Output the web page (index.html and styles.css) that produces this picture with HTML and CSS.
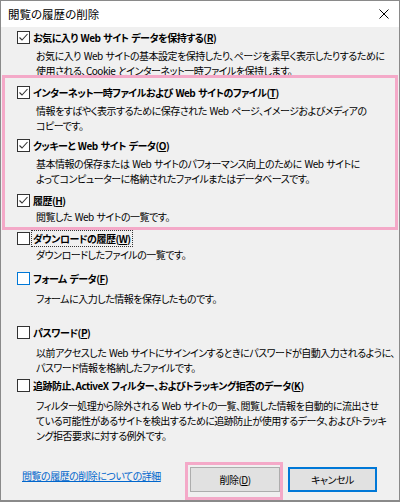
FILE: index.html
```html
<!DOCTYPE html>
<html lang="ja">
<head>
  <meta charset="UTF-8" />
  <title>閲覧の履歴の削除</title>
  <link rel="stylesheet" href="styles.css">
</head>
<body>
  <div class="window">
    <div class="titlebar">
      <span class="title">閲覧の履歴の削除</span>
      <svg class="close" width="10" height="10" viewBox="0 0 10 10">
        <path d="M0.5 0.5 L9.5 9.5 M9.5 0.5 L0.5 9.5" stroke="#000" stroke-width="1" fill="none" />
      </svg>
    </div>

    <div class="content">
      <div class="item first">
        <div class="check"><span class="box"><svg width="11" height="11" viewBox="0 0 11 11"><polyline points="1.5,5.5 4,8 9.5,2" stroke="#333" stroke-width="1.1" fill="none" /></svg></span><span class="name">お気に入り Web サイト データを保持する(<u>R</u>)</span></div>
        <p class="desc">お気に入り Web サイトの基本設定を保持したり、ページを素早く表示したりするために<br>使用される、Cookie とインターネット一時ファイルを保持します。</p>
      </div>

      <div class="item">
        <div class="check"><span class="box"><svg width="11" height="11" viewBox="0 0 11 11"><polyline points="1.5,5.5 4,8 9.5,2" stroke="#333" stroke-width="1.1" fill="none" /></svg></span><span class="name">インターネット一時ファイルおよび Web サイトのファイル(<u>T</u>)</span></div>
        <p class="desc">情報をすばやく表示するために保存された Web ページ、イメージおよびメディアの<br>コピーです。</p>
      </div>

      <div class="item near">
        <div class="check"><span class="box"><svg width="11" height="11" viewBox="0 0 11 11"><polyline points="1.5,5.5 4,8 9.5,2" stroke="#333" stroke-width="1.1" fill="none" /></svg></span><span class="name">クッキーと Web サイト データ(<u>O</u>)</span></div>
        <p class="desc">基本情報の保存または Web サイトのパフォーマンス向上のために Web サイトに<br>よってコンピューターに格納されたファイルまたはデータベースです。</p>
      </div>

      <div class="item">
        <div class="check"><span class="box"><svg width="11" height="11" viewBox="0 0 11 11"><polyline points="1.5,5.5 4,8 9.5,2" stroke="#333" stroke-width="1.1" fill="none" /></svg></span><span class="name">履歴(<u>H</u>)</span></div>
        <p class="desc tight">閲覧した Web サイトの一覧です。</p>
      </div>

      <div class="item">
        <div class="check"><span class="box"></span><span class="name focus">ダウンロードの履歴(<u>W</u>)</span></div>
        <p class="desc tight">ダウンロードしたファイルの一覧です。</p>
      </div>

      <div class="item form">
        <div class="check"><span class="box hover"></span><span class="name">フォーム データ(<u>F</u>)</span></div>
        <p class="desc loose">フォームに入力した情報を保存したものです。</p>
      </div>

      <div class="item wide">
        <div class="check"><span class="box"></span><span class="name">パスワード(<u>P</u>)</span></div>
        <p class="desc loose">以前アクセスした Web サイトにサインインするときにパスワードが自動入力されるように、<br>パスワード情報を格納したファイルです。</p>
      </div>

      <div class="item close-up">
        <div class="check"><span class="box"></span><span class="name">追跡防止、ActiveX フィルター、およびトラッキング拒否のデータ(<u>K</u>)</span></div>
        <p class="desc loose">フィルター処理から除外される Web サイトの一覧、閲覧した情報を自動的に流出させ<br>ている可能性があるサイトを検出するために追跡防止が使用するデータ、およびトラッキ<br>ング拒否要求に対する例外です。</p>
      </div>
    </div>

    <div class="footer">
      <a class="more" href="#">閲覧の履歴の削除についての詳細</a>
      <div class="buttons">
        <button class="btn marked">削除(<u>D</u>)</button>
        <button class="btn default">キャンセル</button>
      </div>
    </div>

    <div class="highlight"></div>
  </div>
</body>
</html>
```

FILE: styles.css
```css
* {
  box-sizing: border-box;
}

body {
  margin: 0;
  font-family: "Noto Sans CJK JP", "Noto Sans", sans-serif;
  font-size: 10px;
  letter-spacing: -0.5px;
  word-spacing: 1px;
  color: #000;
  font-feature-settings: "palt";
}

.window {
  position: relative;
  width: 400px;
  height: 502px;
  border: 1px solid #8a8a8a;
  border-bottom-width: 2px;
  background: #f0f0f0;
  display: flex;
  flex-direction: column;
}

.titlebar {
  height: 26px;
  background: #fff;
  display: flex;
  align-items: center;
  padding: 0 8px 0 7px;
}

.titlebar .title {
  font-size: 11.5px;
  letter-spacing: 0;
  flex: 1;
}

.titlebar .close {
  margin-right: 2px;
}

.content {
  flex: 1;
  padding: 2px 0 0 16px;
}

.item {
  margin-top: 6px;
}

.item.first {
  margin-top: 0;
}

.item.near {
  margin-top: 4px;
}

.item.form {
  margin-top: 8px;
}

.item.wide {
  margin-top: 18px;
}

.item.close-up {
  margin-top: 2px;
}

.check {
  display: flex;
  align-items: center;
  height: 16px;
  white-space: nowrap;
}

.box {
  width: 13px;
  height: 13px;
  border: 1px solid #333;
  background: #fff;
  display: flex;
  align-items: center;
  justify-content: center;
  margin-right: 2px;
}

.box.hover {
  border-color: #0078d7;
}

.name {
  font-weight: bold;
  line-height: 15px;
  padding: 0 1px;
}

.name.focus {
  outline: 1px dotted #333;
}

.desc {
  margin: 3px 0 0 19px;
  line-height: 15px;
  white-space: nowrap;
}

.desc.tight {
  margin-top: 1px;
}

.desc.loose {
  margin-top: 5px;
}

.footer {
  height: 41px;
  display: flex;
  align-items: center;
  padding: 0 22px 0 21px;
}

.more {
  color: #0066cc;
  text-decoration: underline;
  margin-bottom: 8px;
}

.buttons {
  margin-left: auto;
  display: flex;
  gap: 8px;
}

.btn {
  width: 90px;
  height: 25px;
  font-family: inherit;
  font-size: 10px;
  letter-spacing: -0.5px;
  font-feature-settings: "palt";
  background: #e1e1e1;
  border: 1px solid #adadad;
  padding: 0;
  color: #000;
}

.btn.default {
  width: 89px;
  border-color: #0078d7;
  box-shadow: inset 0 0 0 1px #0078d7;
}

.btn.marked {
  position: relative;
}

.btn.marked::after {
  content: "";
  position: absolute;
  left: -6px;
  right: -4px;
  top: -6px;
  bottom: -9px;
  border: 3px solid #f4a9c8;
}

.highlight {
  position: absolute;
  left: 1px;
  top: 74px;
  width: 396px;
  height: 155px;
  border: 3px solid #f4a9c8;
}
```
